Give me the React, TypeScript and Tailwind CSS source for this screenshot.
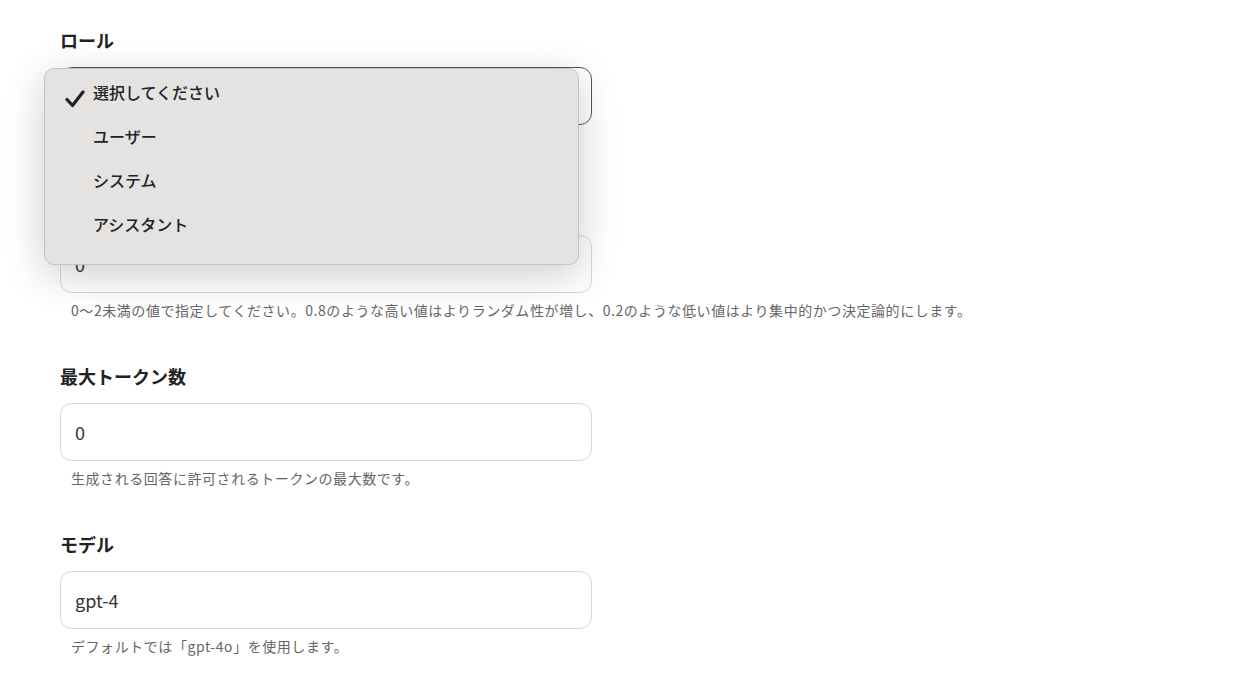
import { useState } from 'react'

const font = "font-['Noto_Sans_CJK_JP','Noto_Sans',sans-serif]"

const options = ['選択してください', 'ユーザー', 'システム', 'アシスタント']

function Field({
  label,
  value,
  help,
  focused,
}: {
  label: string
  value: string
  help?: string
  focused?: boolean
}) {
  return (
    <div className="flex flex-col">
      <div className="text-[18px] font-bold leading-[26px] text-[#222]">{label}</div>
      <div
        className={
          focused
            ? 'mt-[14px] flex h-[58px] w-[532px] items-center rounded-[12px] border border-[#555] bg-white px-[14px] text-[18px] text-[#333]'
            : 'mt-[14px] flex h-[58px] w-[532px] items-center rounded-[12px] border border-[#d3d8e0] bg-white px-[14px] text-[18px] text-[#333]'
        }
      >
        {value}
      </div>
      <div className="mt-[7px] h-[20px] pl-[11px] text-[14px] leading-[20px] tracking-[0.04em] text-[#666]">
        {help}
      </div>
    </div>
  )
}

export default function App() {
  const [selected] = useState(0)

  return (
    <div className={`${font} min-h-[684px] w-full bg-white pl-[60px] pt-[27px]`}>
      <div className="flex flex-col gap-[43px]">
        <div className="relative">
          <Field label="ロール" value="" focused />
          <div className="absolute left-[-16px] top-[41px] z-10 w-[535px] rounded-[10px] border border-[#c4c4c4] bg-[#e4e3e1] pb-[18px] pt-[1px] shadow-[0_10px_40px_rgba(0,0,0,0.2)]">
            {options.map((o, i) => (
              <div key={o} className="relative flex h-[44px] items-center pl-[48px] text-[16px] font-medium text-[#222]">
                {i === selected && (
                  <svg className="absolute left-[20px] top-[20px]" width="20" height="18" viewBox="0 0 20 18">
                    <path d="M2 9.5 L7.5 15.5 L18 2" fill="none" stroke="#222" strokeWidth="3.2" strokeLinecap="round" strokeLinejoin="round" />
                  </svg>
                )}
                {o}
              </div>
            ))}
          </div>
        </div>
        <Field
          label="温度"
          value="0"
          help="0〜2未満の値で指定してください。0.8のような高い値はよりランダム性が増し、0.2のような低い値はより集中的かつ決定論的にします。"
        />
        <Field label="最大トークン数" value="0" help="生成される回答に許可されるトークンの最大数です。" />
        <Field label="モデル" value="gpt-4" help="デフォルトでは「gpt-4o」を使用します。" />
      </div>
    </div>
  )
}
